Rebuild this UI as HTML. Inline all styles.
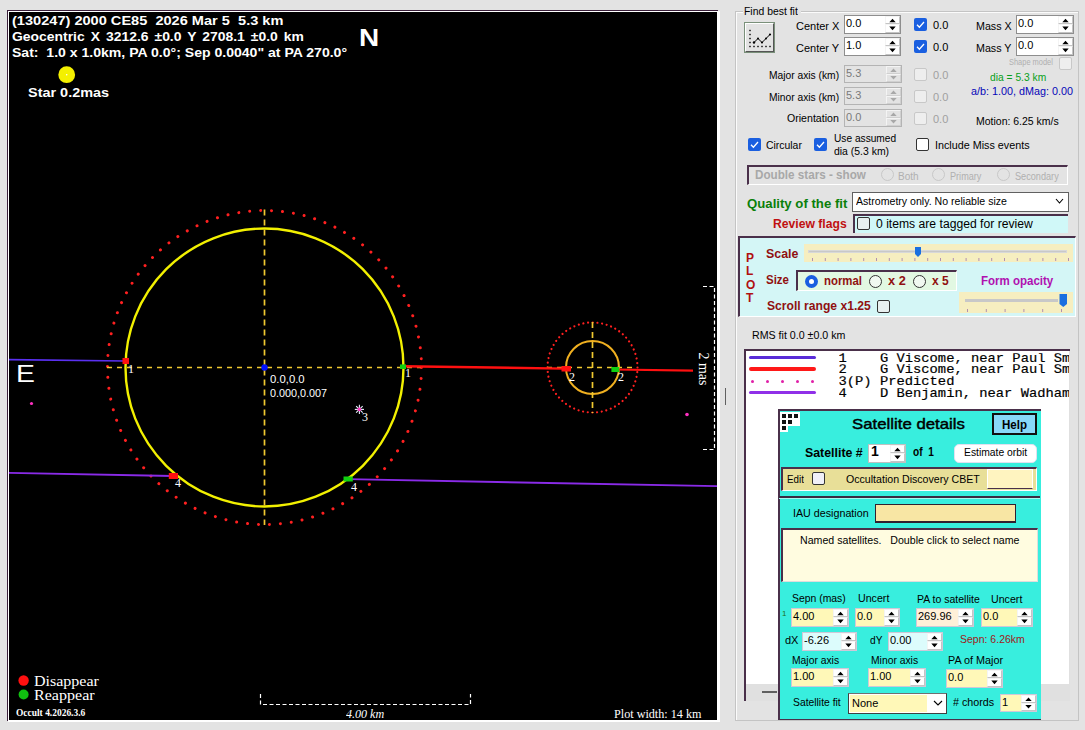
<!DOCTYPE html>
<html><head><meta charset="utf-8"><style>
html,body{margin:0;padding:0;}
body{width:1085px;height:730px;overflow:hidden;position:relative;background:#e3e3e3;}
.r{position:absolute;}
.t{position:absolute;white-space:nowrap;line-height:1;transform-origin:0 0;}
</style></head><body>
<div class='r' style='left:7px;top:10px;width:711px;height:1px;background:#3a1f3a'></div>
<div class='r' style='left:7px;top:10px;width:1px;height:711px;background:#3a1f3a'></div>
<div class='r' style='left:8px;top:11px;width:710px;height:1px;background:#fff'></div>
<div class='r' style='left:8px;top:11px;width:1px;height:710px;background:#fff'></div>
<div class='r' style='left:717px;top:11px;width:3px;height:711px;background:#fff'></div>
<div class='r' style='left:8px;top:720px;width:712px;height:2px;background:#fff'></div>
<div class='r' style='left:9px;top:12px;width:708px;height:708px;background:#000'></div>
<svg class='r' style='left:0;top:0' width='1085' height='730' viewBox='0 0 1085 730'><defs><clipPath id='cp'><rect x='9' y='12' width='708' height='708'/></clipPath></defs><g clip-path='url(#cp)'><circle cx='264.5' cy='367.5' r='157' fill='none' stroke='#ff2020' stroke-width='3' stroke-linecap='round' stroke-dasharray='0.01 10.97'/><circle cx='264.5' cy='367.5' r='139' fill='none' stroke='#f2f000' stroke-width='2.4'/><line x1='107' y1='367.5' x2='421' y2='367.5' stroke='#f0c830' stroke-width='1.7' stroke-dasharray='5 5'/><line x1='264.5' y1='209.5' x2='264.5' y2='525' stroke='#f0c830' stroke-width='1.7' stroke-dasharray='6 4'/><circle cx='264.5' cy='367.5' r='3.2' fill='#0010ff'/><circle cx='592.5' cy='367.5' r='45' fill='none' stroke='#ff2020' stroke-width='2.2' stroke-linecap='round' stroke-dasharray='0.01 4.7'/><circle cx='592.5' cy='367.5' r='26.5' fill='none' stroke='#f0b020' stroke-width='2'/><line x1='547' y1='367.5' x2='637' y2='367.5' stroke='#f0c830' stroke-width='1.7' stroke-dasharray='5 5'/><line x1='592.5' y1='322' x2='592.5' y2='413' stroke='#f0c830' stroke-width='1.7' stroke-dasharray='6 4'/><line x1='9' y1='359.6' x2='125' y2='361' stroke='#5a30f0' stroke-width='1.6'/><line x1='403' y1='366.2' x2='566' y2='368.6' stroke='#ff1010' stroke-width='2.4'/><line x1='615' y1='369.5' x2='693' y2='370.6' stroke='#ff1010' stroke-width='2.2'/><line x1='9' y1='472.9' x2='173' y2='476' stroke='#8a2be8' stroke-width='1.8'/><line x1='348' y1='479.2' x2='717' y2='486.2' stroke='#8a2be8' stroke-width='1.8'/><rect x='122.5' y='358' width='6.5' height='6' fill='#ff1010'/><rect x='400' y='364.4' width='6' height='4.600000000000023' fill='#10d010'/><rect x='561.5' y='366' width='9.5' height='5.5' fill='#ff1010'/><rect x='611.4' y='367' width='7.899999999999977' height='5' fill='#10d010'/><rect x='168.8' y='473' width='9.199999999999989' height='6' fill='#ff1010'/><rect x='343.5' y='476.5' width='9.300000000000011' height='5.0' fill='#10d010'/><line x1='354.80' y1='409.40' x2='364.00' y2='409.40' stroke='#e8f0ff' stroke-width='1.1'/><line x1='356.15' y1='406.15' x2='362.65' y2='412.65' stroke='#e8f0ff' stroke-width='1.1'/><line x1='359.40' y1='404.80' x2='359.40' y2='414.00' stroke='#e8f0ff' stroke-width='1.1'/><line x1='362.65' y1='406.15' x2='356.15' y2='412.65' stroke='#e8f0ff' stroke-width='1.1'/><circle cx='359.4' cy='409.4' r='1.8' fill='#ff30c0'/><circle cx='31.5' cy='403.5' r='1.6' fill='#ff30c0'/><circle cx='687' cy='414.5' r='1.8' fill='#ff30c0'/><circle cx='66.7' cy='74.7' r='8.4' fill='#f4f000'/><circle cx='66.7' cy='74.7' r='0.8' fill='#fff'/><path d='M703 286.5 H714.5 V449.5 H703' fill='none' stroke='#fff' stroke-width='1.2' stroke-dasharray='4 2.5'/><path d='M260.5 694 V704.5 H470.5 V694' fill='none' stroke='#fff' stroke-width='1.2' stroke-dasharray='4 2.5'/><circle cx='23.6' cy='680.5' r='5.2' fill='#ff1010'/><circle cx='23.6' cy='694.5' r='5' fill='#10c010'/></g></svg>
<div id='t0' class='t' style="transform:scaleX(1.121);left:12px;top:14px;font-family:'Liberation Sans';font-size:13px;color:#fff;font-weight:700;">(130247) 2000 CE85&nbsp; 2026 Mar 5&nbsp; 5.3 km</div>
<div id='t1' class='t' style="transform:scaleX(1.070);left:12px;top:30px;font-family:'Liberation Sans';font-size:13px;color:#fff;font-weight:700;word-spacing:2px;">Geocentric X 3212.6 ±0.0 Y 2708.1 ±0.0 km</div>
<div id='t2' class='t' style="transform:scaleX(1.081);left:12px;top:46px;font-family:'Liberation Sans';font-size:13px;color:#fff;font-weight:700;">Sat:&nbsp; 1.0 x 1.0km, PA 0.0°; Sep 0.0040" at PA 270.0°</div>
<div id='t3' class='t' style="transform:scaleX(1.214);left:359px;top:27px;font-family:'Liberation Sans';font-size:23px;color:#fff;font-weight:700;">N</div>
<div id='t4' class='t' style="transform:scaleX(1.231);left:16px;top:363px;font-family:'Liberation Sans';font-size:23px;color:#fff;">E</div>
<div id='t5' class='t' style="transform:scaleX(1.111);left:28px;top:86px;font-family:'Liberation Sans';font-size:13px;color:#fff;font-weight:700;">Star 0.2mas</div>
<div id='t6' class='t' style="transform:scaleX(1.030);left:270px;top:374px;font-family:'Liberation Sans';font-size:11px;color:#fff;">0.0,0.0</div>
<div id='t7' class='t' style="transform:scaleX(0.983);left:270px;top:388px;font-family:'Liberation Sans';font-size:11px;color:#fff;">0.000,0.007</div>
<div id='t8' class='t' style="left:128px;top:363px;font-family:'Liberation Serif';font-size:12px;color:#fff;">1</div>
<div id='t9' class='t' style="left:405px;top:367px;font-family:'Liberation Serif';font-size:12px;color:#fff;">1</div>
<div id='t10' class='t' style="left:569px;top:371px;font-family:'Liberation Serif';font-size:12px;color:#fff;">2</div>
<div id='t11' class='t' style="left:618px;top:371px;font-family:'Liberation Serif';font-size:12px;color:#fff;">2</div>
<div id='t12' class='t' style="left:175px;top:477px;font-family:'Liberation Serif';font-size:12px;color:#fff;">4</div>
<div id='t13' class='t' style="left:351px;top:481px;font-family:'Liberation Serif';font-size:12px;color:#fff;">4</div>
<div id='t14' class='t' style="left:362px;top:411px;font-family:'Liberation Serif';font-size:12px;color:#fff;">3</div>
<div id='t15' class='t' style="transform:scaleX(1.067);left:34px;top:674px;font-family:'Liberation Serif';font-size:15px;color:#fff;">Disappear</div>
<div id='t16' class='t' style="transform:scaleX(1.071);left:34px;top:688px;font-family:'Liberation Serif';font-size:15px;color:#fff;">Reappear</div>
<div id='t17' class='t' style="transform:scaleX(0.945);left:16px;top:708px;font-family:'Liberation Serif';font-size:10px;color:#fff;font-weight:700;">Occult 4.2026.3.6</div>
<div id='t18' class='t' style="transform:scaleX(0.927);left:346px;top:707px;font-family:'Liberation Serif';font-size:13px;color:#fff;font-style:italic;">4.00 km</div>
<div id='t19' class='t' style="transform:scaleX(0.935);left:614px;top:707px;font-family:'Liberation Serif';font-size:13px;color:#fff;">Plot width: 14 km</div>
<div class='t' style="left:684px;top:362px;font-family:'Liberation Serif';font-size:14px;color:#fff;transform:rotate(90deg);transform-origin:50% 50%;width:38px;text-align:center;line-height:14px">2 mas</div>
<div class='r' style='left:736px;top:11px;width:343px;height:1px;background:#c4c4c4'></div>
<div class='r' style='left:737px;top:12px;width:342px;height:1px;background:#fbfbfb'></div>
<div class='r' style='left:735px;top:11px;width:1px;height:710px;background:#c4c4c4'></div>
<div class='r' style='left:736px;top:12px;width:1px;height:709px;background:#fbfbfb'></div>
<div class='r' style='left:1078px;top:11px;width:1px;height:710px;background:#c4c4c4'></div>
<div class='r' style='left:743px;top:4px;width:58px;height:14px;background:#e3e3e3'></div>
<div id='t20' class='t' style="transform:scaleX(0.946);left:744px;top:6px;font-family:'Liberation Sans';font-size:11px;color:#000;">Find best fit</div>
<div class='r' style='left:744px;top:22px;width:31px;height:31px;border:1px solid #7a907a;box-sizing:border-box'></div>
<div class='r' style='left:745px;top:23px;width:29px;height:29px;border-top:1px solid #fff;border-left:1px solid #fff;border-right:1px solid #555;border-bottom:1px solid #555;box-sizing:border-box'></div>
<svg class='r' style='left:744px;top:22px' width='31' height='31'><g fill='#000'><rect x='5.3' y='7.8' width='1.4' height='1.4'/><rect x='5.3' y='11.8' width='1.4' height='1.4'/><rect x='5.3' y='15.8' width='1.4' height='1.4'/><rect x='5.3' y='19.8' width='1.4' height='1.4'/><rect x='5.3' y='23.8' width='1.4' height='1.4'/><rect x='9.3' y='23.8' width='1.4' height='1.4'/><rect x='13.3' y='23.8' width='1.4' height='1.4'/><rect x='17.3' y='23.8' width='1.4' height='1.4'/><rect x='21.3' y='23.8' width='1.4' height='1.4'/><rect x='25.3' y='23.8' width='1.4' height='1.4'/><circle cx='10' cy='20.5' r='1.2'/><circle cx='14' cy='16.5' r='1'/><circle cx='18' cy='20.5' r='1.1'/><circle cx='22' cy='16.5' r='1'/><circle cx='26' cy='12.5' r='1.1'/></g><path d='M10 20.5 L14 16.5 L18 20.5 L22 16.5 L26 12.5' fill='none' stroke='#000' stroke-width='1'/></svg>
<div id='t21' class='t' style="transform:scaleX(1.000);left:796px;top:21px;font-family:'Liberation Sans';font-size:11px;color:#000;">Center X</div>
<div class='r' style='left:844px;top:15px;width:57px;height:19px;background:#fff;border:1px solid #8e8e8e;box-sizing:border-box'></div>
<div class='r' style='left:885px;top:16px;width:15px;height:17px;background:#fff;'></div>
<div class='r' style='left:885px;top:16px;width:15px;height:8px;border:1px solid #c4c4c4;border-top-color:#f4f4f4;border-left-color:#f4f4f4;box-sizing:border-box;background:#fff'></div>
<div class='r' style='left:885px;top:24px;width:15px;height:9px;border:1px solid #c4c4c4;border-top-color:#f4f4f4;border-left-color:#f4f4f4;box-sizing:border-box;background:#fff'></div>
<svg class='r' style='left:885px;top:16px' width='15' height='17'><path d='M4.3 6.3 L7.5 2.8 L10.7 6.3 Z M4.3 10.6 L7.5 14.2 L10.7 10.6 Z' fill='#000'/></svg>
<div id='t22' class='t' style="left:846px;top:18px;font-family:'Liberation Sans';font-size:11px;color:#000;">0.0</div>
<div id='t23' class='t' style="transform:scaleX(1.000);left:796px;top:43px;font-family:'Liberation Sans';font-size:11px;color:#000;">Center Y</div>
<div class='r' style='left:844px;top:37px;width:57px;height:19px;background:#fff;border:1px solid #8e8e8e;box-sizing:border-box'></div>
<div class='r' style='left:885px;top:38px;width:15px;height:17px;background:#fff;'></div>
<div class='r' style='left:885px;top:38px;width:15px;height:8px;border:1px solid #c4c4c4;border-top-color:#f4f4f4;border-left-color:#f4f4f4;box-sizing:border-box;background:#fff'></div>
<div class='r' style='left:885px;top:46px;width:15px;height:9px;border:1px solid #c4c4c4;border-top-color:#f4f4f4;border-left-color:#f4f4f4;box-sizing:border-box;background:#fff'></div>
<svg class='r' style='left:885px;top:38px' width='15' height='17'><path d='M4.3 6.3 L7.5 2.8 L10.7 6.3 Z M4.3 10.6 L7.5 14.2 L10.7 10.6 Z' fill='#000'/></svg>
<div id='t24' class='t' style="left:846px;top:40px;font-family:'Liberation Sans';font-size:11px;color:#000;">1.0</div>
<div class='r' style='left:914px;top:18px;width:13px;height:13px;background:#1a5fe0;border-radius:2px'></div>
<svg class='r' style='left:914px;top:18px' width='13' height='13'><path d='M3 6.8 L5.4 9.2 L10 4' fill='none' stroke='#fff' stroke-width='1.3'/></svg>
<div id='t25' class='t' style="left:933px;top:20px;font-family:'Liberation Sans';font-size:11px;color:#000;">0.0</div>
<div class='r' style='left:914px;top:40px;width:13px;height:13px;background:#1a5fe0;border-radius:2px'></div>
<svg class='r' style='left:914px;top:40px' width='13' height='13'><path d='M3 6.8 L5.4 9.2 L10 4' fill='none' stroke='#fff' stroke-width='1.3'/></svg>
<div id='t26' class='t' style="left:933px;top:42px;font-family:'Liberation Sans';font-size:11px;color:#000;">0.0</div>
<div id='t27' class='t' style="transform:scaleX(0.971);left:976px;top:21px;font-family:'Liberation Sans';font-size:11px;color:#000;">Mass X</div>
<div class='r' style='left:1016px;top:15px;width:58px;height:19px;background:#fff;border:1px solid #8e8e8e;box-sizing:border-box'></div>
<div class='r' style='left:1058px;top:16px;width:15px;height:17px;background:#fff;'></div>
<div class='r' style='left:1058px;top:16px;width:15px;height:8px;border:1px solid #c4c4c4;border-top-color:#f4f4f4;border-left-color:#f4f4f4;box-sizing:border-box;background:#fff'></div>
<div class='r' style='left:1058px;top:24px;width:15px;height:9px;border:1px solid #c4c4c4;border-top-color:#f4f4f4;border-left-color:#f4f4f4;box-sizing:border-box;background:#fff'></div>
<svg class='r' style='left:1058px;top:16px' width='15' height='17'><path d='M4.3 6.3 L7.5 2.8 L10.7 6.3 Z M4.3 10.6 L7.5 14.2 L10.7 10.6 Z' fill='#000'/></svg>
<div id='t28' class='t' style="left:1018px;top:18px;font-family:'Liberation Sans';font-size:11px;color:#000;">0.0</div>
<div id='t29' class='t' style="transform:scaleX(0.971);left:976px;top:43px;font-family:'Liberation Sans';font-size:11px;color:#000;">Mass Y</div>
<div class='r' style='left:1016px;top:37px;width:58px;height:19px;background:#fff;border:1px solid #8e8e8e;box-sizing:border-box'></div>
<div class='r' style='left:1058px;top:38px;width:15px;height:17px;background:#fff;'></div>
<div class='r' style='left:1058px;top:38px;width:15px;height:8px;border:1px solid #c4c4c4;border-top-color:#f4f4f4;border-left-color:#f4f4f4;box-sizing:border-box;background:#fff'></div>
<div class='r' style='left:1058px;top:46px;width:15px;height:9px;border:1px solid #c4c4c4;border-top-color:#f4f4f4;border-left-color:#f4f4f4;box-sizing:border-box;background:#fff'></div>
<svg class='r' style='left:1058px;top:38px' width='15' height='17'><path d='M4.3 6.3 L7.5 2.8 L10.7 6.3 Z M4.3 10.6 L7.5 14.2 L10.7 10.6 Z' fill='#000'/></svg>
<div id='t30' class='t' style="left:1018px;top:40px;font-family:'Liberation Sans';font-size:11px;color:#000;">0.0</div>
<div id='t31' class='t' style="transform:scaleX(0.827);left:1009px;top:58px;font-family:'Liberation Sans';font-size:9px;color:#b0b0b0;">Shape model</div>
<div class='r' style='left:1059px;top:57px;width:13px;height:13px;background:#eeeeee;border:1px solid #c8c8c8;box-sizing:border-box;border-radius:2px'></div>
<div id='t32' class='t' style="transform:scaleX(0.932);left:769px;top:70px;font-family:'Liberation Sans';font-size:11px;color:#000;">Major axis (km)</div>
<div class='r' style='left:844px;top:65px;width:58px;height:18px;background:#e3e3e3;border:1px solid #b4b4b4;box-sizing:border-box'></div>
<div class='r' style='left:886px;top:66px;width:15px;height:16px;background:#e3e3e3;'></div>
<div class='r' style='left:886px;top:66px;width:15px;height:8px;border:1px solid #d0d0d0;border-top-color:#f4f4f4;border-left-color:#f4f4f4;box-sizing:border-box;background:#e3e3e3'></div>
<div class='r' style='left:886px;top:74px;width:15px;height:8px;border:1px solid #d0d0d0;border-top-color:#f4f4f4;border-left-color:#f4f4f4;box-sizing:border-box;background:#e3e3e3'></div>
<svg class='r' style='left:886px;top:66px' width='15' height='16'><path d='M4.3 6.1 L7.5 2.5 L10.7 6.1 Z M4.3 9.9 L7.5 13.5 L10.7 9.9 Z' fill='#a8a8a8'/></svg>
<div id='t33' class='t' style="left:846px;top:68px;font-family:'Liberation Sans';font-size:11px;color:#7a7a7a;">5.3</div>
<div id='t34' class='t' style="transform:scaleX(0.932);left:769px;top:92px;font-family:'Liberation Sans';font-size:11px;color:#000;">Minor axis (km)</div>
<div class='r' style='left:844px;top:87px;width:58px;height:18px;background:#e3e3e3;border:1px solid #b4b4b4;box-sizing:border-box'></div>
<div class='r' style='left:886px;top:88px;width:15px;height:16px;background:#e3e3e3;'></div>
<div class='r' style='left:886px;top:88px;width:15px;height:8px;border:1px solid #d0d0d0;border-top-color:#f4f4f4;border-left-color:#f4f4f4;box-sizing:border-box;background:#e3e3e3'></div>
<div class='r' style='left:886px;top:96px;width:15px;height:8px;border:1px solid #d0d0d0;border-top-color:#f4f4f4;border-left-color:#f4f4f4;box-sizing:border-box;background:#e3e3e3'></div>
<svg class='r' style='left:886px;top:88px' width='15' height='16'><path d='M4.3 6.1 L7.5 2.5 L10.7 6.1 Z M4.3 9.9 L7.5 13.5 L10.7 9.9 Z' fill='#a8a8a8'/></svg>
<div id='t35' class='t' style="left:846px;top:90px;font-family:'Liberation Sans';font-size:11px;color:#7a7a7a;">5.3</div>
<div id='t36' class='t' style="transform:scaleX(0.962);left:787px;top:113px;font-family:'Liberation Sans';font-size:11px;color:#000;">Orientation</div>
<div class='r' style='left:844px;top:109px;width:58px;height:18px;background:#e3e3e3;border:1px solid #b4b4b4;box-sizing:border-box'></div>
<div class='r' style='left:886px;top:110px;width:15px;height:16px;background:#e3e3e3;'></div>
<div class='r' style='left:886px;top:110px;width:15px;height:8px;border:1px solid #d0d0d0;border-top-color:#f4f4f4;border-left-color:#f4f4f4;box-sizing:border-box;background:#e3e3e3'></div>
<div class='r' style='left:886px;top:118px;width:15px;height:8px;border:1px solid #d0d0d0;border-top-color:#f4f4f4;border-left-color:#f4f4f4;box-sizing:border-box;background:#e3e3e3'></div>
<svg class='r' style='left:886px;top:110px' width='15' height='16'><path d='M4.3 6.1 L7.5 2.5 L10.7 6.1 Z M4.3 9.9 L7.5 13.5 L10.7 9.9 Z' fill='#a8a8a8'/></svg>
<div id='t37' class='t' style="left:846px;top:112px;font-family:'Liberation Sans';font-size:11px;color:#7a7a7a;">0.0</div>
<div class='r' style='left:914px;top:68px;width:13px;height:13px;background:#eeeeee;border:1px solid #c8c8c8;box-sizing:border-box;border-radius:2px'></div>
<div id='t38' class='t' style="left:933px;top:70px;font-family:'Liberation Sans';font-size:11px;color:#a0a0a0;">0.0</div>
<div class='r' style='left:914px;top:90px;width:13px;height:13px;background:#eeeeee;border:1px solid #c8c8c8;box-sizing:border-box;border-radius:2px'></div>
<div id='t39' class='t' style="left:933px;top:92px;font-family:'Liberation Sans';font-size:11px;color:#a0a0a0;">0.0</div>
<div class='r' style='left:914px;top:112px;width:13px;height:13px;background:#eeeeee;border:1px solid #c8c8c8;box-sizing:border-box;border-radius:2px'></div>
<div id='t40' class='t' style="left:933px;top:114px;font-family:'Liberation Sans';font-size:11px;color:#a0a0a0;">0.0</div>
<div id='t41' class='t' style="transform:scaleX(0.933);left:990px;top:72px;font-family:'Liberation Sans';font-size:11px;color:#08a020;">dia = 5.3 km</div>
<div id='t42' class='t' style="transform:scaleX(0.981);left:971px;top:86px;font-family:'Liberation Sans';font-size:11px;color:#0606b8;">a/b: 1.00, dMag: 0.00</div>
<div id='t43' class='t' style="transform:scaleX(0.953);left:976px;top:116px;font-family:'Liberation Sans';font-size:11px;color:#000;">Motion: 6.25 km/s</div>
<div class='r' style='left:748px;top:138px;width:13px;height:13px;background:#1a5fe0;border-radius:2px'></div>
<svg class='r' style='left:748px;top:138px' width='13' height='13'><path d='M3 6.8 L5.4 9.2 L10 4' fill='none' stroke='#fff' stroke-width='1.3'/></svg>
<div id='t44' class='t' style="transform:scaleX(0.946);left:766px;top:140px;font-family:'Liberation Sans';font-size:11px;color:#000;">Circular</div>
<div class='r' style='left:814px;top:138px;width:13px;height:13px;background:#1a5fe0;border-radius:2px'></div>
<svg class='r' style='left:814px;top:138px' width='13' height='13'><path d='M3 6.8 L5.4 9.2 L10 4' fill='none' stroke='#fff' stroke-width='1.3'/></svg>
<div id='t45' class='t' style="transform:scaleX(0.924);left:834px;top:133px;font-family:'Liberation Sans';font-size:11px;color:#000;">Use assumed</div>
<div id='t46' class='t' style="transform:scaleX(0.948);left:834px;top:146px;font-family:'Liberation Sans';font-size:11px;color:#000;">dia (5.3 km)</div>
<div class='r' style='left:916px;top:138px;width:13px;height:13px;background:#fff;border:1px solid #333;box-sizing:border-box;border-radius:2px'></div>
<div id='t47' class='t' style="transform:scaleX(0.979);left:935px;top:140px;font-family:'Liberation Sans';font-size:11px;color:#000;">Include Miss events</div>
<div class='r' style='left:747px;top:165px;width:321px;height:20px;border:1px solid #fff;border-top:2px solid #4a304a;border-left:2px solid #4a304a;box-sizing:border-box'></div>
<div id='t48' class='t' style="transform:scaleX(0.973);left:755px;top:169px;font-family:'Liberation Sans';font-size:12px;color:#a8a8a8;font-weight:700;">Double stars - show</div>
<div class='r' style='left:881px;top:168px;width:13px;height:13px;background:#e3e3e3;border:1px solid #c8c8c8;box-sizing:border-box;border-radius:50%'></div>
<div id='t49' class='t' style="transform:scaleX(1.000);left:898px;top:172px;font-family:'Liberation Sans';font-size:10px;color:#b0b0b0;">Both</div>
<div class='r' style='left:932px;top:168px;width:13px;height:13px;background:#e3e3e3;border:1px solid #c8c8c8;box-sizing:border-box;border-radius:50%'></div>
<div id='t50' class='t' style="transform:scaleX(0.912);left:950px;top:172px;font-family:'Liberation Sans';font-size:10px;color:#b0b0b0;">Primary</div>
<div class='r' style='left:997px;top:168px;width:13px;height:13px;background:#e3e3e3;border:1px solid #c8c8c8;box-sizing:border-box;border-radius:50%'></div>
<div id='t51' class='t' style="transform:scaleX(0.915);left:1015px;top:172px;font-family:'Liberation Sans';font-size:10px;color:#b0b0b0;">Secondary</div>
<div id='t52' class='t' style="transform:scaleX(1.099);left:747px;top:198px;font-family:'Liberation Sans';font-size:12px;color:#0a800a;font-weight:700;">Quality of the fit</div>
<div class='r' style='left:852px;top:192px;width:217px;height:20px;background:#fff;border:1px solid #606060;box-sizing:border-box'></div>
<div id='t53' class='t' style="transform:scaleX(0.962);left:856px;top:196px;font-family:'Liberation Sans';font-size:11px;color:#000;">Astrometry only. No reliable size</div>
<svg class='r' style='left:1055px;top:198px' width='10' height='7'><path d='M1 1 L4.5 5 L8 1' fill='none' stroke='#000' stroke-width='1.1'/></svg>
<div id='t54' class='t' style="transform:scaleX(1.014);left:773px;top:218px;font-family:'Liberation Sans';font-size:12px;color:#c01010;font-weight:700;">Review flags</div>
<div class='r' style='left:853px;top:214px;width:215px;height:19px;background:#d0f8f8;border-top:2px solid #4a304a;border-left:2px solid #4a304a;box-sizing:border-box'></div>
<div class='r' style='left:857px;top:217px;width:13px;height:13px;background:#e8f0f0;border:1px solid #333;box-sizing:border-box;border-radius:2px'></div>
<div id='t55' class='t' style="transform:scaleX(1.013);left:876px;top:218px;font-family:'Liberation Sans';font-size:12px;color:#000;">0 items are tagged for review</div>
<div class='r' style='left:738px;top:236px;width:338px;height:81px;background:#d4f6f6;border-top:2px solid #4a304a;border-left:2px solid #4a304a;border-right:1px solid #fff;border-bottom:1px solid #fff;box-sizing:border-box'></div>
<div id='t56' class='t' style="left:746px;top:252.0px;font-family:'Liberation Sans';font-size:12px;color:#b01010;font-weight:700;">P</div>
<div id='t57' class='t' style="left:746px;top:265.3px;font-family:'Liberation Sans';font-size:12px;color:#b01010;font-weight:700;">L</div>
<div id='t58' class='t' style="left:746px;top:278.6px;font-family:'Liberation Sans';font-size:12px;color:#b01010;font-weight:700;">O</div>
<div id='t59' class='t' style="left:746px;top:291.9px;font-family:'Liberation Sans';font-size:12px;color:#b01010;font-weight:700;">T</div>
<div id='t60' class='t' style="transform:scaleX(1.033);left:766px;top:248px;font-family:'Liberation Sans';font-size:12px;color:#901010;font-weight:700;">Scale</div>
<div class='r' style='left:804px;top:244px;width:269px;height:18px;background:#f6eec0'></div>
<div class='r' style='left:808px;top:250px;width:259px;height:3px;background:#c8c8c8;border:1px solid #d8d8d8;box-sizing:border-box'></div>
<svg class='r' style='left:804px;top:244px' width='269' height='18'><line x1='8.5' y1='14' x2='8.5' y2='17' stroke='#b090b0' stroke-width='1'/><line x1='21.3' y1='14' x2='21.3' y2='17' stroke='#b090b0' stroke-width='1'/><line x1='34.1' y1='14' x2='34.1' y2='17' stroke='#b090b0' stroke-width='1'/><line x1='46.9' y1='14' x2='46.9' y2='17' stroke='#b090b0' stroke-width='1'/><line x1='59.7' y1='14' x2='59.7' y2='17' stroke='#b090b0' stroke-width='1'/><line x1='72.5' y1='14' x2='72.5' y2='17' stroke='#b090b0' stroke-width='1'/><line x1='85.3' y1='14' x2='85.3' y2='17' stroke='#b090b0' stroke-width='1'/><line x1='98.1' y1='14' x2='98.1' y2='17' stroke='#b090b0' stroke-width='1'/><line x1='110.9' y1='14' x2='110.9' y2='17' stroke='#b090b0' stroke-width='1'/><line x1='123.7' y1='14' x2='123.7' y2='17' stroke='#b090b0' stroke-width='1'/><line x1='136.5' y1='14' x2='136.5' y2='17' stroke='#b090b0' stroke-width='1'/><line x1='149.3' y1='14' x2='149.3' y2='17' stroke='#b090b0' stroke-width='1'/><line x1='162.1' y1='14' x2='162.1' y2='17' stroke='#b090b0' stroke-width='1'/><line x1='174.9' y1='14' x2='174.9' y2='17' stroke='#b090b0' stroke-width='1'/><line x1='187.7' y1='14' x2='187.7' y2='17' stroke='#b090b0' stroke-width='1'/><line x1='200.5' y1='14' x2='200.5' y2='17' stroke='#b090b0' stroke-width='1'/><line x1='213.3' y1='14' x2='213.3' y2='17' stroke='#b090b0' stroke-width='1'/><line x1='226.1' y1='14' x2='226.1' y2='17' stroke='#b090b0' stroke-width='1'/><line x1='238.9' y1='14' x2='238.9' y2='17' stroke='#b090b0' stroke-width='1'/><line x1='251.7' y1='14' x2='251.7' y2='17' stroke='#b090b0' stroke-width='1'/><line x1='264.5' y1='14' x2='264.5' y2='17' stroke='#b090b0' stroke-width='1'/><path d='M111 3 H117 V10 L114 13 L111 10 Z' fill='#1a6fe0'/></svg>
<div id='t61' class='t' style="transform:scaleX(0.957);left:766px;top:274px;font-family:'Liberation Sans';font-size:12px;color:#901010;font-weight:700;">Size</div>
<div class='r' style='left:796px;top:270px;width:161px;height:21px;background:#e2f8e2;border-top:2px solid #4a304a;border-left:2px solid #4a304a;border-right:1px solid #fff;border-bottom:1px solid #fff;box-sizing:border-box'></div>
<div class='r' style='left:805px;top:275px;width:13px;height:13px;background:#1a5fe0;border-radius:50%'></div>
<div class='r' style='left:809px;top:279px;width:5px;height:5px;background:#fff;border-radius:50%'></div>
<div id='t62' class='t' style="transform:scaleX(0.947);left:824px;top:275px;font-family:'Liberation Sans';font-size:12px;color:#901010;font-weight:700;">normal</div>
<div class='r' style='left:869px;top:275px;width:13px;height:13px;background:#f0f8f0;border:1px solid #333;box-sizing:border-box;border-radius:50%'></div>
<div id='t63' class='t' style="transform:scaleX(1.062);left:888px;top:275px;font-family:'Liberation Sans';font-size:12px;color:#901010;font-weight:700;">x 2</div>
<div class='r' style='left:913px;top:275px;width:13px;height:13px;background:#f0f8f0;border:1px solid #333;box-sizing:border-box;border-radius:50%'></div>
<div id='t64' class='t' style="transform:scaleX(1.000);left:932px;top:275px;font-family:'Liberation Sans';font-size:12px;color:#901010;font-weight:700;">x 5</div>
<div id='t65' class='t' style="transform:scaleX(0.959);left:981px;top:275px;font-family:'Liberation Sans';font-size:12px;color:#b010b0;font-weight:700;">Form opacity</div>
<div id='t66' class='t' style="transform:scaleX(1.010);left:767px;top:300px;font-family:'Liberation Sans';font-size:12px;color:#901010;font-weight:700;">Scroll range x1.25</div>
<div class='r' style='left:877px;top:300px;width:13px;height:13px;background:#e8f0f0;border:1px solid #333;box-sizing:border-box;border-radius:2px'></div>
<div class='r' style='left:959px;top:292px;width:114px;height:21px;background:#f6eec0'></div>
<div class='r' style='left:965px;top:299px;width:93px;height:3px;background:#c8c8c8'></div>
<svg class='r' style='left:959px;top:292px' width='114' height='21'><line x1='8.5' y1='17' x2='8.5' y2='20' stroke='#b090b0' stroke-width='1'/><line x1='27.3' y1='17' x2='27.3' y2='20' stroke='#b090b0' stroke-width='1'/><line x1='46.1' y1='17' x2='46.1' y2='20' stroke='#b090b0' stroke-width='1'/><line x1='64.9' y1='17' x2='64.9' y2='20' stroke='#b090b0' stroke-width='1'/><line x1='83.7' y1='17' x2='83.7' y2='20' stroke='#b090b0' stroke-width='1'/><line x1='102.5' y1='17' x2='102.5' y2='20' stroke='#b090b0' stroke-width='1'/><path d='M100.5 2 H108 V12 L104.25 15 L100.5 12 Z' fill='#1a6fe0'/></svg>
<div id='t67' class='t' style="transform:scaleX(0.968);left:752px;top:330px;font-family:'Liberation Sans';font-size:11px;color:#000;">RMS fit 0.0 ±0.0 km</div>
<div class='r' style='left:744px;top:349px;width:326px;height:352px;background:#e0e0e0;border-top:2px solid #4a304a;border-left:2px solid #4a304a;box-sizing:border-box'></div>
<div class='r' style='left:746px;top:351px;width:323px;height:333px;background:#fff'></div>
<div class='r' style='left:762px;top:691px;width:15px;height:2px;background:#606060'></div>
<div class='r' style='left:749px;top:356px;width:67px;height:3px;background:#5a2cd8;border-radius:1.5px'></div>
<div class='r' style='left:749px;top:367px;width:67px;height:4px;background:#ff1818;border-radius:2px'></div>
<div class='r' style='left:751px;top:380px;width:3px;height:3px;background:#e020a8;border-radius:50%'></div>
<div class='r' style='left:766px;top:380px;width:3px;height:3px;background:#e020a8;border-radius:50%'></div>
<div class='r' style='left:781px;top:380px;width:3px;height:3px;background:#e020a8;border-radius:50%'></div>
<div class='r' style='left:796px;top:380px;width:3px;height:3px;background:#e020a8;border-radius:50%'></div>
<div class='r' style='left:811px;top:380px;width:3px;height:3px;background:#e020a8;border-radius:50%'></div>
<div class='r' style='left:749px;top:391px;width:67px;height:3px;background:#9030e8;border-radius:1.5px'></div>
<div class='t' style="left:838.5px;top:351.5px;font-family:'Liberation Mono';font-size:13.8px;line-height:1;color:#000;width:230.5px;overflow:hidden;transform:scale(1,0.88);transform-origin:0 10.5px;-webkit-text-stroke:0.2px #000">1&nbsp;&nbsp;&nbsp;&nbsp;G Viscome, near Paul Smith</div>
<div class='t' style="left:838.5px;top:363.3px;font-family:'Liberation Mono';font-size:13.8px;line-height:1;color:#000;width:230.5px;overflow:hidden;transform:scale(1,0.88);transform-origin:0 10.5px;-webkit-text-stroke:0.2px #000">2&nbsp;&nbsp;&nbsp;&nbsp;G Viscome, near Paul Smith</div>
<div class='t' style="left:838.5px;top:375.1px;font-family:'Liberation Mono';font-size:13.8px;line-height:1;color:#000;width:230.5px;overflow:hidden;transform:scale(1,0.88);transform-origin:0 10.5px;-webkit-text-stroke:0.2px #000">3(P)&nbsp;Predicted</div>
<div class='t' style="left:838.5px;top:386.9px;font-family:'Liberation Mono';font-size:13.8px;line-height:1;color:#000;width:230.5px;overflow:hidden;transform:scale(1,0.88);transform-origin:0 10.5px;-webkit-text-stroke:0.2px #000">4&nbsp;&nbsp;&nbsp;&nbsp;D Benjamin, near Wadham</div>
<div class='r' style='left:725px;top:388px;width:1px;height:17px;background:#606060'></div>
<div class='r' style='left:736px;top:720px;width:343px;height:1px;background:#c4c4c4'></div>
<div class='r' style='left:778px;top:409px;width:263px;height:311px;background:#38eede;border-top:2px solid #4a304a;border-left:2px solid #4a304a;border-bottom:1px solid #4a304a;box-sizing:border-box'></div>
<svg class='r' style='left:780px;top:412px' width='21' height='21'><path d='M0 0 H20 V14 H14 V8 H14 V14 H8 V20 H0 Z' fill='#fff'/><g fill='#101010'><rect x='2' y='2' width='4' height='4'/><rect x='8' y='2' width='4' height='4'/><rect x='14' y='2' width='4' height='4'/><rect x='2' y='8' width='4' height='4'/><rect x='8' y='8' width='4' height='4'/><rect x='2' y='14' width='4' height='4'/></g></svg>
<div id='t68' class='t' style="transform:scaleX(1.119);left:852px;top:416px;font-family:'Liberation Sans';font-size:15px;color:#000;-webkit-text-stroke:0.45px #000;">Satellite details</div>
<div class='r' style='left:992px;top:413px;width:45px;height:22px;background:#88d8f8;border:2px solid #101010;box-sizing:border-box'></div>
<div id='t69' class='t' style="transform:scaleX(0.960);left:1002px;top:419px;font-family:'Liberation Sans';font-size:12px;color:#000;font-weight:700;">Help</div>
<div id='t70' class='t' style="transform:scaleX(0.950);left:805px;top:446px;font-family:'Liberation Sans';font-size:13px;color:#000;font-weight:700;">Satellite #</div>
<div class='r' style='left:868px;top:444px;width:38px;height:19px;background:#fff;border:1px solid #c0c0c0;box-sizing:border-box'></div>
<div class='r' style='left:890px;top:445px;width:15px;height:17px;background:#fff;'></div>
<div class='r' style='left:890px;top:445px;width:15px;height:8px;border:1px solid #c4c4c4;border-top-color:#f4f4f4;border-left-color:#f4f4f4;box-sizing:border-box;background:#fff'></div>
<div class='r' style='left:890px;top:453px;width:15px;height:9px;border:1px solid #c4c4c4;border-top-color:#f4f4f4;border-left-color:#f4f4f4;box-sizing:border-box;background:#fff'></div>
<svg class='r' style='left:890px;top:445px' width='15' height='17'><path d='M4.3 6.3 L7.5 2.8 L10.7 6.3 Z M4.3 10.6 L7.5 14.2 L10.7 10.6 Z' fill='#000'/></svg>
<div id='t71' class='t' style="left:870px;top:447px;font-family:'Liberation Sans';font-size:11px;color:#000;"></div>
<div id='t72' class='t' style="left:871px;top:444px;font-family:'Liberation Sans';font-size:14px;color:#000;font-weight:700;">1</div>
<div id='t73' class='t' style="transform:scaleX(0.778);left:913px;top:445px;font-family:'Liberation Sans';font-size:13px;color:#000;font-weight:700;">of&nbsp; 1</div>
<div class='r' style='left:954px;top:444px;width:83px;height:19px;background:#fff;border-radius:5px;border:1px solid #e0e0f0;box-sizing:border-box'></div>
<div id='t74' class='t' style="transform:scaleX(0.939);left:964px;top:447px;font-family:'Liberation Sans';font-size:11px;color:#000;">Estimate orbit</div>
<div class='r' style='left:781px;top:467px;width:256px;height:24px;background:#e8df98;border-top:2px solid #4a304a;border-left:2px solid #4a304a;border-right:1px solid #fff;border-bottom:1px solid #fff;box-sizing:border-box'></div>
<div id='t75' class='t' style="transform:scaleX(0.889);left:787px;top:474px;font-family:'Liberation Sans';font-size:11px;color:#000;">Edit</div>
<div class='r' style='left:812px;top:472px;width:13px;height:13px;background:#f0f0f8;border:1px solid #333;box-sizing:border-box;border-radius:2px'></div>
<div id='t76' class='t' style="transform:scaleX(0.964);left:846px;top:474px;font-family:'Liberation Sans';font-size:11px;color:#000;">Occultation Discovery CBET</div>
<div class='r' style='left:987px;top:469px;width:46px;height:20px;background:#fff4c0;border:1px solid #fff;border-bottom:1px solid #4a304a;box-sizing:border-box'></div>
<div class='r' style='left:779px;top:496px;width:261px;height:2px;background:#3a2a40'></div>
<div class='r' style='left:779px;top:498px;width:261px;height:1px;background:#a8f8f0'></div>
<div id='t77' class='t' style="transform:scaleX(0.974);left:793px;top:508px;font-family:'Liberation Sans';font-size:11px;color:#000;">IAU designation</div>
<div class='r' style='left:875px;top:504px;width:141px;height:19px;background:#f8e6a4;border:1px solid #302030;border-bottom-width:2px;box-sizing:border-box'></div>
<div class='r' style='left:781px;top:528px;width:257px;height:54px;background:#fffce0;border-top:2px solid #4a304a;border-left:2px solid #4a304a;border-right:1px solid #ddd;border-bottom:1px solid #ddd;box-sizing:border-box'></div>
<div id='t78' class='t' style="transform:scaleX(0.965);left:800px;top:535px;font-family:'Liberation Sans';font-size:11px;color:#000;">Named satellites.&nbsp;&nbsp; Double click to select name</div>
<div id='t79' class='t' style="transform:scaleX(0.945);left:792px;top:593px;font-family:'Liberation Sans';font-size:11px;color:#000;">Sepn (mas)</div>
<div id='t80' class='t' style="transform:scaleX(0.968);left:858px;top:593px;font-family:'Liberation Sans';font-size:11px;color:#000;">Uncert</div>
<div id='t81' class='t' style="transform:scaleX(0.954);left:917px;top:594px;font-family:'Liberation Sans';font-size:11px;color:#000;">PA to satellite</div>
<div id='t82' class='t' style="transform:scaleX(0.968);left:991px;top:594px;font-family:'Liberation Sans';font-size:11px;color:#000;">Uncert</div>
<div id='t83' class='t' style="left:782px;top:610px;font-family:'Liberation Sans';font-size:8px;color:#207020;">1</div>
<div class='r' style='left:791px;top:608px;width:58px;height:19px;background:#fff8b8;border:1px solid #cfc8d8;box-sizing:border-box'></div>
<div class='r' style='left:833px;top:609px;width:15px;height:17px;background:#fff;'></div>
<div class='r' style='left:833px;top:609px;width:15px;height:8px;border:1px solid #c4c4c4;border-top-color:#f4f4f4;border-left-color:#f4f4f4;box-sizing:border-box;background:#fff'></div>
<div class='r' style='left:833px;top:617px;width:15px;height:9px;border:1px solid #c4c4c4;border-top-color:#f4f4f4;border-left-color:#f4f4f4;box-sizing:border-box;background:#fff'></div>
<svg class='r' style='left:833px;top:609px' width='15' height='17'><path d='M4.3 6.3 L7.5 2.8 L10.7 6.3 Z M4.3 10.6 L7.5 14.2 L10.7 10.6 Z' fill='#000'/></svg>
<div id='t84' class='t' style="left:793px;top:611px;font-family:'Liberation Sans';font-size:11px;color:#000;">4.00</div>
<div class='r' style='left:855px;top:608px;width:45px;height:19px;background:#fff8b8;border:1px solid #cfc8d8;box-sizing:border-box'></div>
<div class='r' style='left:884px;top:609px;width:15px;height:17px;background:#fff;'></div>
<div class='r' style='left:884px;top:609px;width:15px;height:8px;border:1px solid #c4c4c4;border-top-color:#f4f4f4;border-left-color:#f4f4f4;box-sizing:border-box;background:#fff'></div>
<div class='r' style='left:884px;top:617px;width:15px;height:9px;border:1px solid #c4c4c4;border-top-color:#f4f4f4;border-left-color:#f4f4f4;box-sizing:border-box;background:#fff'></div>
<svg class='r' style='left:884px;top:609px' width='15' height='17'><path d='M4.3 6.3 L7.5 2.8 L10.7 6.3 Z M4.3 10.6 L7.5 14.2 L10.7 10.6 Z' fill='#000'/></svg>
<div id='t85' class='t' style="left:857px;top:611px;font-family:'Liberation Sans';font-size:11px;color:#000;">0.0</div>
<div class='r' style='left:916px;top:608px;width:58px;height:19px;background:#fff0d8;border:1px solid #cfc8d8;box-sizing:border-box'></div>
<div class='r' style='left:958px;top:609px;width:15px;height:17px;background:#fff;'></div>
<div class='r' style='left:958px;top:609px;width:15px;height:8px;border:1px solid #c4c4c4;border-top-color:#f4f4f4;border-left-color:#f4f4f4;box-sizing:border-box;background:#fff'></div>
<div class='r' style='left:958px;top:617px;width:15px;height:9px;border:1px solid #c4c4c4;border-top-color:#f4f4f4;border-left-color:#f4f4f4;box-sizing:border-box;background:#fff'></div>
<svg class='r' style='left:958px;top:609px' width='15' height='17'><path d='M4.3 6.3 L7.5 2.8 L10.7 6.3 Z M4.3 10.6 L7.5 14.2 L10.7 10.6 Z' fill='#000'/></svg>
<div id='t86' class='t' style="left:918px;top:611px;font-family:'Liberation Sans';font-size:11px;color:#000;">269.96</div>
<div class='r' style='left:981px;top:608px;width:52px;height:19px;background:#fff8b8;border:1px solid #cfc8d8;box-sizing:border-box'></div>
<div class='r' style='left:1017px;top:609px;width:15px;height:17px;background:#fff;'></div>
<div class='r' style='left:1017px;top:609px;width:15px;height:8px;border:1px solid #c4c4c4;border-top-color:#f4f4f4;border-left-color:#f4f4f4;box-sizing:border-box;background:#fff'></div>
<div class='r' style='left:1017px;top:617px;width:15px;height:9px;border:1px solid #c4c4c4;border-top-color:#f4f4f4;border-left-color:#f4f4f4;box-sizing:border-box;background:#fff'></div>
<svg class='r' style='left:1017px;top:609px' width='15' height='17'><path d='M4.3 6.3 L7.5 2.8 L10.7 6.3 Z M4.3 10.6 L7.5 14.2 L10.7 10.6 Z' fill='#000'/></svg>
<div id='t87' class='t' style="left:983px;top:611px;font-family:'Liberation Sans';font-size:11px;color:#000;">0.0</div>
<div id='t88' class='t' style="transform:scaleX(1.000);left:785px;top:635px;font-family:'Liberation Sans';font-size:11px;color:#000;">dX</div>
<div class='r' style='left:802px;top:632px;width:55px;height:19px;background:#dcfcfc;border:1px solid #cfc8d8;box-sizing:border-box'></div>
<div class='r' style='left:841px;top:633px;width:15px;height:17px;background:#fff;'></div>
<div class='r' style='left:841px;top:633px;width:15px;height:8px;border:1px solid #c4c4c4;border-top-color:#f4f4f4;border-left-color:#f4f4f4;box-sizing:border-box;background:#fff'></div>
<div class='r' style='left:841px;top:641px;width:15px;height:9px;border:1px solid #c4c4c4;border-top-color:#f4f4f4;border-left-color:#f4f4f4;box-sizing:border-box;background:#fff'></div>
<svg class='r' style='left:841px;top:633px' width='15' height='17'><path d='M4.3 6.3 L7.5 2.8 L10.7 6.3 Z M4.3 10.6 L7.5 14.2 L10.7 10.6 Z' fill='#000'/></svg>
<div id='t89' class='t' style="left:804px;top:635px;font-family:'Liberation Sans';font-size:11px;color:#000;">-6.26</div>
<div id='t90' class='t' style="transform:scaleX(0.923);left:870px;top:635px;font-family:'Liberation Sans';font-size:11px;color:#000;">dY</div>
<div class='r' style='left:888px;top:632px;width:55px;height:19px;background:#dcfcfc;border:1px solid #cfc8d8;box-sizing:border-box'></div>
<div class='r' style='left:927px;top:633px;width:15px;height:17px;background:#fff;'></div>
<div class='r' style='left:927px;top:633px;width:15px;height:8px;border:1px solid #c4c4c4;border-top-color:#f4f4f4;border-left-color:#f4f4f4;box-sizing:border-box;background:#fff'></div>
<div class='r' style='left:927px;top:641px;width:15px;height:9px;border:1px solid #c4c4c4;border-top-color:#f4f4f4;border-left-color:#f4f4f4;box-sizing:border-box;background:#fff'></div>
<svg class='r' style='left:927px;top:633px' width='15' height='17'><path d='M4.3 6.3 L7.5 2.8 L10.7 6.3 Z M4.3 10.6 L7.5 14.2 L10.7 10.6 Z' fill='#000'/></svg>
<div id='t91' class='t' style="left:890px;top:635px;font-family:'Liberation Sans';font-size:11px;color:#000;">0.00</div>
<div id='t92' class='t' style="transform:scaleX(0.955);left:960px;top:634px;font-family:'Liberation Sans';font-size:11px;color:#a01818;">Sepn: 6.26km</div>
<div id='t93' class='t' style="transform:scaleX(0.939);left:792px;top:655px;font-family:'Liberation Sans';font-size:11px;color:#000;">Major axis</div>
<div id='t94' class='t' style="transform:scaleX(0.939);left:871px;top:655px;font-family:'Liberation Sans';font-size:11px;color:#000;">Minor axis</div>
<div id='t95' class='t' style="transform:scaleX(0.982);left:948px;top:655px;font-family:'Liberation Sans';font-size:11px;color:#000;">PA of Major</div>
<div class='r' style='left:791px;top:668px;width:58px;height:19px;background:#fff8b8;border:1px solid #cfc8d8;box-sizing:border-box'></div>
<div class='r' style='left:833px;top:669px;width:15px;height:17px;background:#fff;'></div>
<div class='r' style='left:833px;top:669px;width:15px;height:8px;border:1px solid #c4c4c4;border-top-color:#f4f4f4;border-left-color:#f4f4f4;box-sizing:border-box;background:#fff'></div>
<div class='r' style='left:833px;top:677px;width:15px;height:9px;border:1px solid #c4c4c4;border-top-color:#f4f4f4;border-left-color:#f4f4f4;box-sizing:border-box;background:#fff'></div>
<svg class='r' style='left:833px;top:669px' width='15' height='17'><path d='M4.3 6.3 L7.5 2.8 L10.7 6.3 Z M4.3 10.6 L7.5 14.2 L10.7 10.6 Z' fill='#000'/></svg>
<div id='t96' class='t' style="left:793px;top:671px;font-family:'Liberation Sans';font-size:11px;color:#000;">1.00</div>
<div class='r' style='left:868px;top:668px;width:58px;height:19px;background:#fff8b8;border:1px solid #cfc8d8;box-sizing:border-box'></div>
<div class='r' style='left:910px;top:669px;width:15px;height:17px;background:#fff;'></div>
<div class='r' style='left:910px;top:669px;width:15px;height:8px;border:1px solid #c4c4c4;border-top-color:#f4f4f4;border-left-color:#f4f4f4;box-sizing:border-box;background:#fff'></div>
<div class='r' style='left:910px;top:677px;width:15px;height:9px;border:1px solid #c4c4c4;border-top-color:#f4f4f4;border-left-color:#f4f4f4;box-sizing:border-box;background:#fff'></div>
<svg class='r' style='left:910px;top:669px' width='15' height='17'><path d='M4.3 6.3 L7.5 2.8 L10.7 6.3 Z M4.3 10.6 L7.5 14.2 L10.7 10.6 Z' fill='#000'/></svg>
<div id='t97' class='t' style="left:870px;top:671px;font-family:'Liberation Sans';font-size:11px;color:#000;">1.00</div>
<div class='r' style='left:946px;top:669px;width:57px;height:19px;background:#fff8b8;border:1px solid #cfc8d8;box-sizing:border-box'></div>
<div class='r' style='left:987px;top:670px;width:15px;height:17px;background:#fff;'></div>
<div class='r' style='left:987px;top:670px;width:15px;height:8px;border:1px solid #c4c4c4;border-top-color:#f4f4f4;border-left-color:#f4f4f4;box-sizing:border-box;background:#fff'></div>
<div class='r' style='left:987px;top:678px;width:15px;height:9px;border:1px solid #c4c4c4;border-top-color:#f4f4f4;border-left-color:#f4f4f4;box-sizing:border-box;background:#fff'></div>
<svg class='r' style='left:987px;top:670px' width='15' height='17'><path d='M4.3 6.3 L7.5 2.8 L10.7 6.3 Z M4.3 10.6 L7.5 14.2 L10.7 10.6 Z' fill='#000'/></svg>
<div id='t98' class='t' style="left:948px;top:672px;font-family:'Liberation Sans';font-size:11px;color:#000;">0.0</div>
<div id='t99' class='t' style="transform:scaleX(0.940);left:793px;top:697px;font-family:'Liberation Sans';font-size:11px;color:#000;">Satellite fit</div>
<div class='r' style='left:848px;top:693px;width:99px;height:21px;background:#fff;border:1px solid #404040;border-top-color:#707070;box-sizing:border-box'></div>
<div class='r' style='left:850px;top:695px;width:77px;height:17px;background:#fff8b8'></div>
<div id='t100' class='t' style="transform:scaleX(1.000);left:852px;top:698px;font-family:'Liberation Sans';font-size:11px;color:#000;">None</div>
<svg class='r' style='left:933px;top:700px' width='11' height='7'><path d='M1 1 L5 5 L9 1' fill='none' stroke='#000' stroke-width='1.1'/></svg>
<div id='t101' class='t' style="transform:scaleX(0.976);left:953px;top:697px;font-family:'Liberation Sans';font-size:11px;color:#000;"># chords</div>
<div class='r' style='left:1000px;top:694px;width:37px;height:18px;background:#fff8b8;border:1px solid #cfc8d8;box-sizing:border-box'></div>
<div class='r' style='left:1021px;top:695px;width:15px;height:16px;background:#fff;'></div>
<div class='r' style='left:1021px;top:695px;width:15px;height:8px;border:1px solid #c4c4c4;border-top-color:#f4f4f4;border-left-color:#f4f4f4;box-sizing:border-box;background:#fff'></div>
<div class='r' style='left:1021px;top:703px;width:15px;height:8px;border:1px solid #c4c4c4;border-top-color:#f4f4f4;border-left-color:#f4f4f4;box-sizing:border-box;background:#fff'></div>
<svg class='r' style='left:1021px;top:695px' width='15' height='16'><path d='M4.3 6.1 L7.5 2.5 L10.7 6.1 Z M4.3 9.9 L7.5 13.5 L10.7 9.9 Z' fill='#000'/></svg>
<div id='t102' class='t' style="left:1002px;top:697px;font-family:'Liberation Sans';font-size:11px;color:#000;">1</div>
</body></html>
